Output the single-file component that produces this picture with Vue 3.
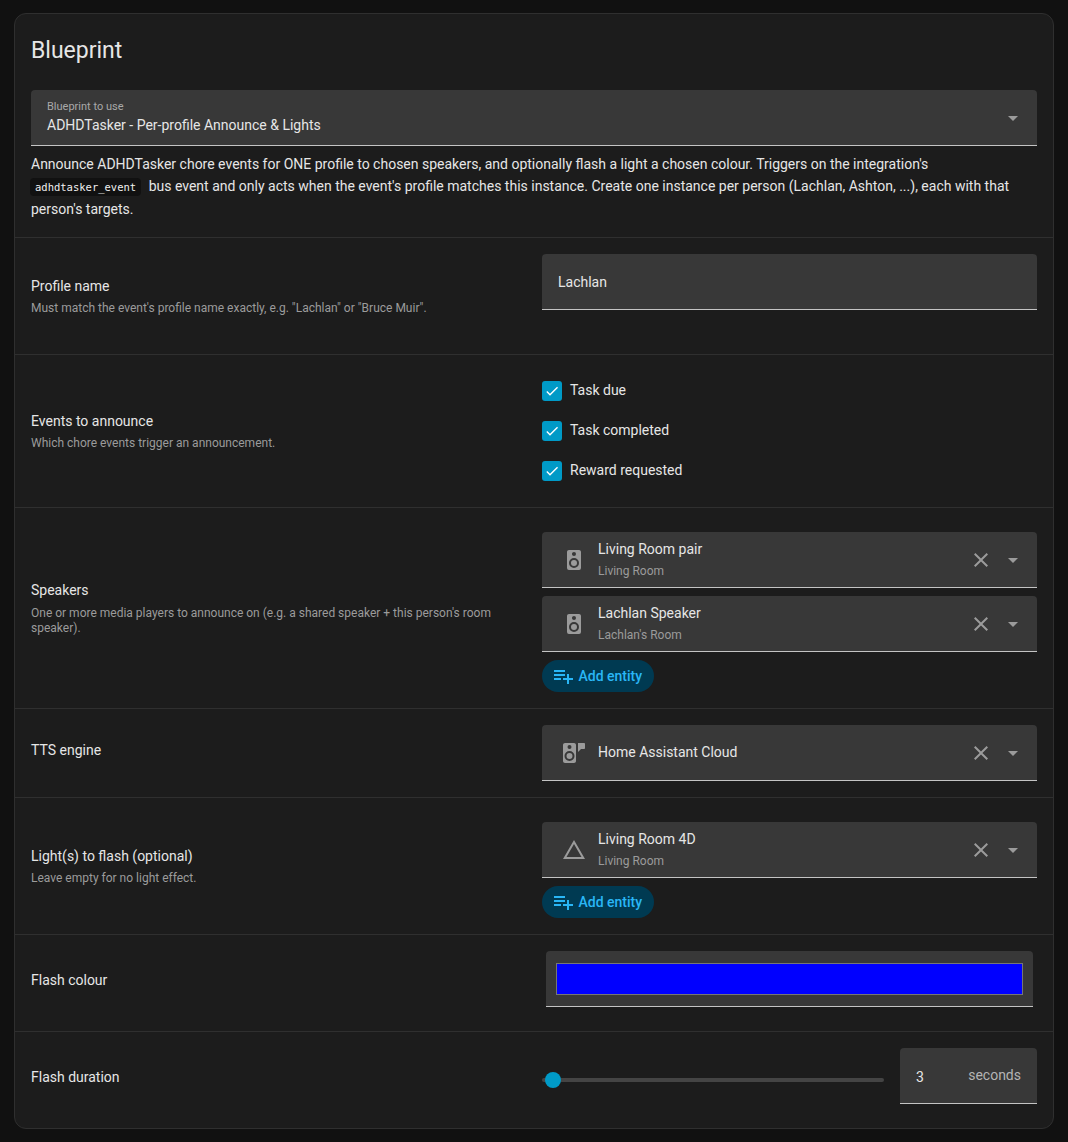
<script setup>
const mdi = {
  speaker: 'M12,12A3,3 0 0,0 9,15A3,3 0 0,0 12,18A3,3 0 0,0 15,15A3,3 0 0,0 12,12M12,20A5,5 0 0,1 7,15A5,5 0 0,1 12,10A5,5 0 0,1 17,15A5,5 0 0,1 12,20M12,4A2,2 0 0,1 14,6A2,2 0 0,1 12,8C10.89,8 10,7.1 10,6C10,4.89 10.89,4 12,4M17,2H7C5.89,2 5,2.89 5,4V20A2,2 0 0,0 7,22H17A2,2 0 0,0 19,20V4C19,2.89 18.1,2 17,2Z',
  tts: 'M16 2H22C22.55 2 23 2.45 23 3V7C23 7.55 22.55 8 22 8H19L16 11V3C16 2.45 16 2 16 2ZM3 2H12C13.1 2 14 2.9 14 4V20C14 21.1 13.1 22 12 22H3C1.9 22 1 21.1 1 20V4C1 2.9 1.9 2 3 2ZM7.5 4A2 2 0 0 0 5.5 6A2 2 0 0 0 7.5 8A2 2 0 0 0 9.5 6A2 2 0 0 0 7.5 4ZM7.5 10A5 5 0 0 0 2.5 15A5 5 0 0 0 7.5 20A5 5 0 0 0 12.5 15A5 5 0 0 0 7.5 10ZM7.5 12A3 3 0 0 1 10.5 15A3 3 0 0 1 7.5 18A3 3 0 0 1 4.5 15A3 3 0 0 1 7.5 12Z',
  triangle: 'M12,2L1,21H23M12,6L19.53,19H4.47',
  close: 'M19,6.41L17.59,5L12,10.59L6.41,5L5,6.41L10.59,12L5,17.59L6.41,19L12,13.41L17.59,19L19,17.59L13.41,12L19,6.41Z',
  down: 'M7,10L12,15L17,10H7Z',
  check: 'M21,7L9,19L3.5,13.5L4.91,12.09L9,16.17L19.59,5.59L21,7Z',
  add: 'M3 16H10V14H3M18 14V10H16V14H12V16H16V20H18V16H22V14M14 6H3V8H14M14 10H3V12H14V10Z'
}

const events = ['Task due', 'Task completed', 'Reward requested']
const speakers = [
  {name: 'Living Room pair', area: 'Living Room', icon: mdi.speaker},
  {name: 'Lachlan Speaker', area: "Lachlan's Room", icon: mdi.speaker}
]
const lights = [
  {name: 'Living Room 4D', area: 'Living Room', icon: mdi.triangle}
]
</script>

<template>
  <div class="page">
    <div class="card">
      <div class="intro">
        <h1 class="title">Blueprint</h1>
        <div class="field select">
          <div class="select-text">
            <div class="float-label">Blueprint to use</div>
            <div class="select-value">ADHDTasker - Per-profile Announce &amp; Lights</div>
          </div>
          <svg class="arrow" viewBox="0 0 24 24"><path :d="mdi.down" /></svg>
        </div>
        <p class="description">
          Announce ADHDTasker chore events for ONE profile to chosen speakers, and optionally flash a light a chosen colour. Triggers on the integration's
          <code>adhdtasker_event</code> bus event and only acts when the event's profile matches this instance. Create one instance per person (Lachlan, Ashton, ...), each with that person's targets.
        </p>
      </div>

      <section class="row">
        <div class="label">
          <div class="name">Profile name</div>
          <div class="helper">Must match the event's profile name exactly, e.g. "Lachlan" or "Bruce Muir".</div>
        </div>
        <div class="control helper-space">
          <div class="field text-field">Lachlan</div>
        </div>
      </section>

      <section class="row">
        <div class="label">
          <div class="name">Events to announce</div>
          <div class="helper">Which chore events trigger an announcement.</div>
        </div>
        <div class="control">
          <div v-for="event in events" :key="event" class="check-row">
            <span class="checkbox">
              <svg viewBox="0 0 24 24"><path :d="mdi.check" /></svg>
            </span>
            <span class="check-text">{{ event }}</span>
          </div>
        </div>
      </section>

      <section class="row">
        <div class="label">
          <div class="name">Speakers</div>
          <div class="helper">One or more media players to announce on (e.g. a shared speaker + this person's room speaker).</div>
        </div>
        <div class="control stack">
          <div v-for="item in speakers" :key="item.name" class="field picker">
            <svg class="picker-icon" viewBox="0 0 24 24"><path :d="item.icon" /></svg>
            <div class="picker-text">
              <div class="picker-name">{{ item.name }}</div>
              <div class="picker-area">{{ item.area }}</div>
            </div>
            <svg class="clear" viewBox="0 0 24 24"><path :d="mdi.close" /></svg>
            <svg class="arrow" viewBox="0 0 24 24"><path :d="mdi.down" /></svg>
          </div>
          <button class="add-button">
            <svg viewBox="0 0 24 24"><path :d="mdi.add" /></svg>
            Add entity
          </button>
        </div>
      </section>

      <section class="row">
        <div class="label">
          <div class="name">TTS engine</div>
          <div class="helper"></div>
        </div>
        <div class="control">
          <div class="field picker">
            <svg class="picker-icon" viewBox="0 0 24 24"><path :d="mdi.tts" /></svg>
            <div class="picker-text">
              <div class="picker-name">Home Assistant Cloud</div>
            </div>
            <svg class="clear" viewBox="0 0 24 24"><path :d="mdi.close" /></svg>
            <svg class="arrow" viewBox="0 0 24 24"><path :d="mdi.down" /></svg>
          </div>
        </div>
      </section>

      <section class="row">
        <div class="label">
          <div class="name">Light(s) to flash (optional)</div>
          <div class="helper">Leave empty for no light effect.</div>
        </div>
        <div class="control stack">
          <div v-for="item in lights" :key="item.name" class="field picker">
            <svg class="picker-icon" viewBox="0 0 24 24"><path :d="item.icon" /></svg>
            <div class="picker-text">
              <div class="picker-name">{{ item.name }}</div>
              <div class="picker-area">{{ item.area }}</div>
            </div>
            <svg class="clear" viewBox="0 0 24 24"><path :d="mdi.close" /></svg>
            <svg class="arrow" viewBox="0 0 24 24"><path :d="mdi.down" /></svg>
          </div>
          <button class="add-button">
            <svg viewBox="0 0 24 24"><path :d="mdi.add" /></svg>
            Add entity
          </button>
        </div>
      </section>

      <section class="row">
        <div class="label">
          <div class="name">Flash colour</div>
          <div class="helper"></div>
        </div>
        <div class="control bottom-space">
          <div class="field color-field">
            <div class="swatch"></div>
          </div>
        </div>
      </section>

      <section class="row">
        <div class="label">
          <div class="name">Flash duration</div>
          <div class="helper"></div>
        </div>
        <div class="control slider-control bottom-space">
          <div class="slider">
            <div class="track"><div class="thumb"></div></div>
          </div>
          <div class="field number-field">
            <span class="number">3</span>
            <span class="unit">seconds</span>
          </div>
        </div>
      </section>
    </div>
  </div>
</template>

<style>
html, body {
  background: #111111;
}
</style>

<style scoped>
.page {
  padding: 13px 14px;
  font-family: Roboto, "Liberation Sans", sans-serif;
  color: #e6e6e6;
  font-size: 14px;
}

.card {
  width: 1040px;
  box-sizing: border-box;
  background: #1c1c1c;
  border: 1px solid #2f2f2f;
  border-radius: 12px;
}

.intro {
  padding: 21px 16px 16.2px;
}

.title {
  margin: 0 0 23px;
  font-size: 23px;
  font-weight: 400;
  line-height: 32px;
}

.field {
  background: #383838;
  border-radius: 4px 4px 0 0;
  border-bottom: 1px solid #c4c4c4;
  box-sizing: border-box;
  height: 56px;
}

.select {
  display: flex;
  align-items: center;
  padding-left: 16px;
  padding-right: 12px;
}

.select-text {
  flex: 1;
  padding-bottom: 1px;
}

.float-label {
  font-size: 11px;
  line-height: 14px;
  color: #a8a8a8;
}

.select-value {
  line-height: 20px;
  margin-top: 1px;
}

.arrow {
  width: 24px;
  height: 24px;
  fill: #9b9b9b;
  flex-shrink: 0;
}

.description {
  margin: 6.6px 0 0;
  line-height: 22.4px;
}

code {
  font-family: "DejaVu Sans Mono", monospace;
  font-size: 10.5px;
  color: #f0f0f0;
  background: #111111;
  border-radius: 4px;
  padding: 3px 5px;
  margin-left: -1px;
  margin-right: 4px;
}

.row {
  display: flex;
  align-items: center;
  border-top: 1px solid #2f2f2f;
  padding: 16px;
}

.label {
  width: 511px;
  flex-shrink: 0;
  padding-right: 32px;
  box-sizing: border-box;
}

.name {
  line-height: 20px;
}

.helper {
  font-size: 12px;
  line-height: 15px;
  color: #9b9b9b;
  margin-top: 5.4px;
}

.helper:empty {
  margin-top: 5px;
  height: 1px;
}

.control {
  flex: 1;
  min-width: 0;
}

.helper-space {
  padding-bottom: 28px;
}

.bottom-space {
  padding-bottom: 8px;
}

.stack {
  display: flex;
  flex-direction: column;
  gap: 8px;
  align-items: flex-start;
  padding-top: 8px;
}

.stack .field {
  width: 100%;
}

.text-field {
  display: flex;
  align-items: center;
  padding-left: 16px;
}

.check-row {
  display: flex;
  align-items: center;
  height: 40px;
  gap: 8px;
}

.check-text {
  margin-bottom: 2px;
}

.checkbox {
  width: 20px;
  height: 20px;
  border-radius: 3px;
  background: #009ac7;
  display: flex;
  align-items: center;
  justify-content: center;
}

.checkbox svg {
  width: 16px;
  height: 16px;
  fill: #ffffff;
}

.picker {
  display: flex;
  align-items: center;
  padding-left: 20px;
  padding-right: 12px;
}

.picker-icon {
  width: 24px;
  height: 24px;
  fill: #9b9b9b;
  flex-shrink: 0;
  margin-right: 12px;
}

.picker-text {
  flex: 1;
  min-width: 0;
  padding-bottom: 2px;
}

.picker-name {
  line-height: 20px;
}

.picker-area {
  font-size: 12px;
  line-height: 16px;
  color: #9b9b9b;
  margin-top: 4px;
}

.clear {
  width: 24px;
  height: 24px;
  fill: #9b9b9b;
  margin-right: 8px;
  flex-shrink: 0;
}

.add-button {
  display: flex;
  align-items: center;
  gap: 3.5px;
  height: 32px;
  padding: 0 12px 0 9px;
  border: none;
  border-radius: 16px;
  background: #003a52;
  color: #29b6f6;
  font-family: inherit;
  font-size: 14px;
  font-weight: 500;
}

.add-button svg {
  width: 24px;
  height: 24px;
  fill: #29b6f6;
}

.color-field {
  margin: 0 4px;
  padding: 12px 10px 0;
}

.swatch {
  height: 32px;
  box-sizing: border-box;
  background: #0000ff;
  border: 1px solid #767676;
}

.slider-control {
  display: flex;
  align-items: center;
  gap: 16px;
}

.slider {
  flex: 1;
}

.track {
  position: relative;
  height: 4px;
  border-radius: 2px;
  background: #444444;
  margin-top: 8px;
}

.thumb {
  position: absolute;
  left: 3px;
  top: -6px;
  width: 16px;
  height: 16px;
  border-radius: 50%;
  background: #009ac7;
}

.number-field {
  width: 137px;
  display: flex;
  align-items: center;
  justify-content: space-between;
  padding: 0 16px;
}

.number {
  margin-top: 3px;
}

.unit {
  color: #b4b4b4;
  margin-top: -1px;
}
</style>
